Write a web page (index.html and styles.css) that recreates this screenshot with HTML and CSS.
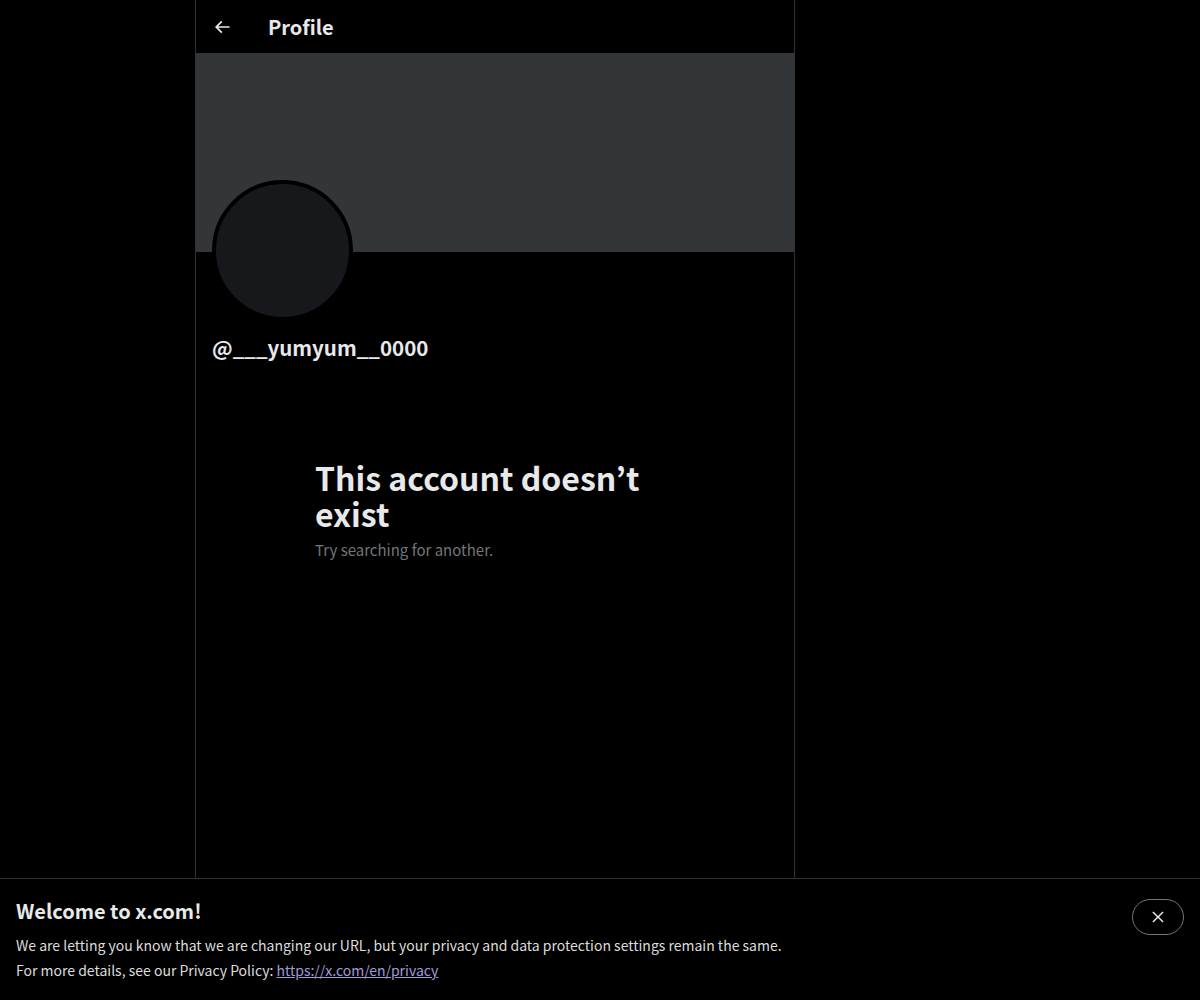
FILE: index.html
```html
<!DOCTYPE html>
<html lang="en">
<head>
<meta charset="utf-8">
<title>Profile / X</title>
<link rel="stylesheet" href="styles.css">
</head>
<body>
<div class="page">
  <main class="column">
    <header class="topbar">
      <div class="back">
        <svg viewBox="0 0 24 24" width="20" height="20" aria-hidden="true"><path fill="#e7e9ea" d="M7.414 13l5.043 5.04-1.414 1.42L3.586 12l7.457-7.46 1.414 1.42L7.414 11H21v2H7.414z"/></svg>
      </div>
      <h2 class="title">Profile</h2>
    </header>
    <div class="banner"></div>
    <div class="identity">
      <div class="avatar"></div>
      <div class="handle">@___yumyum__0000</div>
    </div>
    <section class="empty">
      <h1 class="empty-title">This account doesn’t exist</h1>
      <p class="empty-sub">Try searching for another.</p>
    </section>
  </main>
</div>
<div class="notice">
  <div class="notice-text">
    <h2 class="notice-title">Welcome to x.com!</h2>
    <p class="notice-line">We are letting you know that we are changing our URL, but your privacy and data protection settings remain the same.</p>
    <p class="notice-line">For more details, see our Privacy Policy: <a class="notice-link" href="#">https://x.com/en/privacy</a></p>
  </div>
  <button class="close" aria-label="Close">
    <svg viewBox="0 0 24 24" width="18" height="18" aria-hidden="true"><path fill="#e7e9ea" d="M10.59 12L4.54 5.96l1.42-1.42L12 10.59l6.04-6.05 1.42 1.42L13.41 12l6.05 6.04-1.42 1.42L12 13.41l-6.04 6.05-1.42-1.42L10.59 12z"/></svg>
  </button>
</div>
</body>
</html>
```
FILE: styles.css
```css
* { box-sizing: border-box; }
html, body {
  margin: 0;
  padding: 0;
  background: #000;
  color: #e7e9ea;
  font-family: "Noto Sans CJK JP", "Noto Sans", sans-serif;
}
.page {
  display: flex;
  padding-left: 195px;
  min-height: 1000px;
}
.column {
  width: 600px;
  min-height: 1000px;
  border-left: 1px solid #2f3336;
  border-right: 1px solid #2f3336;
}
.topbar {
  height: 53px;
  display: flex;
  align-items: center;
  padding: 0 16px;
}
.back {
  width: 56px;
  display: flex;
  align-items: center;
}
.back svg { display: block; }
.title {
  margin: 0;
  font-size: 20px;
  line-height: 24px;
  font-weight: 700;
}
.banner {
  height: 199px;
  background: #333639;
}
.identity {
  padding: 0 16px;
}
.avatar {
  width: 141px;
  height: 141px;
  margin-top: -72px;
  border-radius: 50%;
  border: 4px solid #000;
  background: #16181c;
}
.handle {
  margin-top: 14px;
  font-size: 20.5px;
  line-height: 24px;
  font-weight: 700;
}
.empty {
  width: 360px;
  margin: 100px auto 0;
}
.empty-title {
  margin: 0;
  font-size: 32px;
  line-height: 36px;
  font-weight: 700;
}
.empty-sub {
  margin: 9px 0 0;
  font-size: 15px;
  line-height: 20px;
  color: #71767b;
}
.notice {
  position: fixed;
  left: 0;
  right: 0;
  bottom: 0;
  height: 122px;
  background: #000;
  border-top: 1px solid #2f3336;
  display: flex;
  justify-content: space-between;
  align-items: flex-start;
  padding: 18px 16px 0 16px;
}
.notice-title {
  margin: 0 0 8px;
  font-size: 20px;
  line-height: 28px;
  font-weight: 700;
}
.notice-line {
  margin: 0;
  font-size: 14px;
  line-height: 25px;
  color: #dcdcdc;
}
.notice-link {
  color: #a09ad8;
  text-decoration: underline;
}
.close {
  margin-top: 2px;
  width: 52px;
  height: 36px;
  border-radius: 18px;
  border: 1px solid #71767b;
  background: transparent;
  display: flex;
  align-items: center;
  justify-content: center;
  padding: 0;
}
.close svg { display: block; }
```
